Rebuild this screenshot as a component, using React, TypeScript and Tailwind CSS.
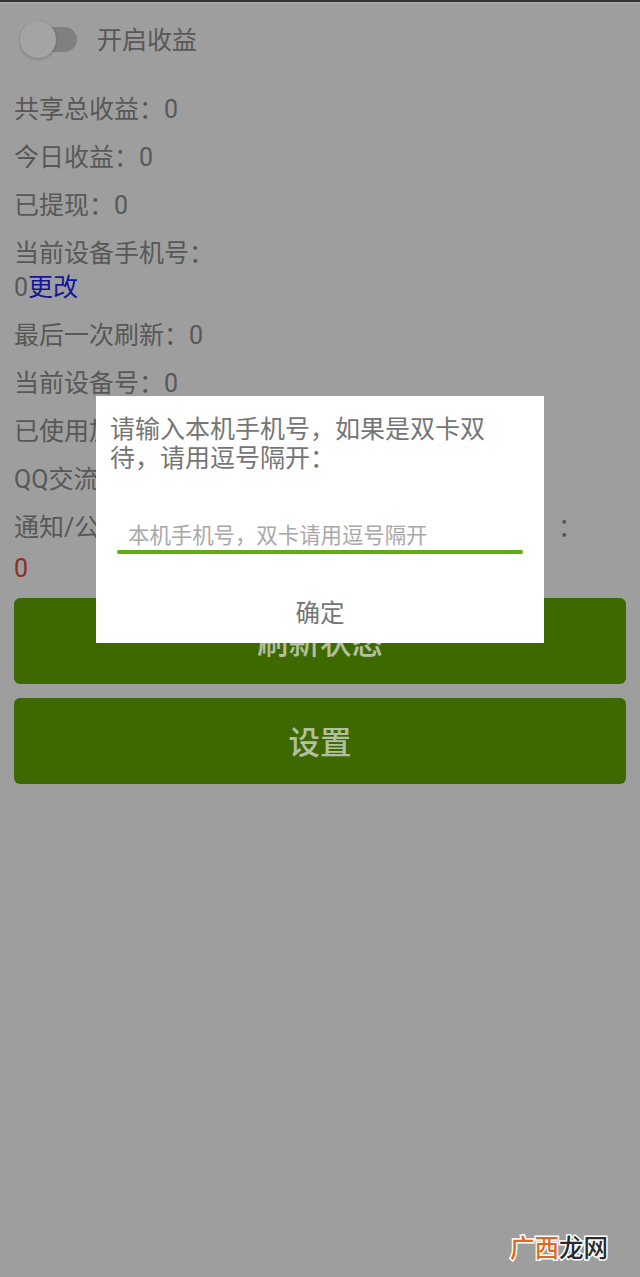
import React from 'react';

const cjk = "font-['Roboto','Noto_Sans_CJK_SC',sans-serif]";

const StatRow: React.FC<{ label: string; value?: string }> = ({ label, value = '0' }) => (
    <p className="h-[48px] leading-[48px] text-[25px] text-[#585858] whitespace-nowrap overflow-hidden">
        {label}：{value}
    </p>
);

const App: React.FC = () => {
    return (
        <div className={`relative w-[640px] h-[1277px] overflow-hidden bg-[#9e9e9e] ${cjk}`}>
            <div className="h-[2px] bg-[#333333]" />
            <div className="h-[2px] bg-[#a8a8a8]" />

            <div className="h-[72px] pl-[20px] flex items-center">
                <div className="relative w-[58px] h-[38px] mr-[19px]">
                    <div className="absolute left-[16px] top-[6px] w-[41px] h-[25px] rounded-full bg-[#808080]" />
                    <div className="absolute left-0 top-0 w-[36px] h-[37px] rounded-full bg-[#a4a4a4] shadow-[0_1px_3px_rgba(0,0,0,0.25)]" />
                </div>
                <span className="pt-[2px] text-[25px] text-[#585858]">开启收益</span>
            </div>

            <div className="px-[14px] pt-[10px]">
                <StatRow label="共享总收益" />
                <StatRow label="今日收益" />
                <StatRow label="已提现" />
                <p className="pt-[7px] text-[25px] leading-[34px] text-[#585858]">当前设备手机号：</p>
                <p className="text-[25px] leading-[34px] text-[#585858]">
                    0<span className="text-[#15159a]">更改</span>
                </p>
                <div className="h-[7px]" />
                <StatRow label="最后一次刷新" />
                <StatRow label="当前设备号" />
                <StatRow label="已使用加速流量" />
                <StatRow label="QQ交流群" />
                <div className="h-[48px] w-[569px] flex justify-between items-center text-[25px] text-[#585858]">
                    <span>通知/公告</span>
                    <span>：</span>
                </div>
                <p className="h-[34px] leading-[34px] text-[25px] text-[#8f2a2a]">0</p>
                <div className="h-[86px] mt-[12px] pt-[6px] rounded-[6px] bg-[#3d6900] flex items-center justify-center text-[31.5px] font-medium text-[#b0c0a0]">
                    刷新状态
                </div>
                <div className="h-[86px] mt-[14px] pt-[6px] rounded-[6px] bg-[#3d6900] flex items-center justify-center text-[31.5px] font-medium text-[#b0c0a0]">
                    设置
                </div>
            </div>

            <div className="absolute left-[96px] top-[396px] w-[448px] h-[247px] bg-white">
                <p className="pl-[14px] pr-[50px] pt-[19px] text-[25px] leading-[29px] text-[#757575]">
                    请输入本机手机号，如果是双卡双待，请用逗号隔开：
                </p>
                <div className="absolute left-[21px] top-[123px] w-[406px] h-[31px] pl-[11px] text-[21.4px] leading-[34px] text-[#a8a8a8] whitespace-nowrap">
                    本机手机号，双卡请用逗号隔开
                </div>
                <div className="absolute left-[21px] top-[154px] w-[406px] h-[4px] rounded-full bg-[#62ab12]" />
                <p className="absolute left-0 right-0 top-[201px] text-center text-[24.5px] leading-[34px] text-[#757575]">
                    确定
                </p>
            </div>

            <div className="absolute left-[510px] top-[1233px] text-[24.5px] leading-[32px] font-medium whitespace-nowrap [-webkit-text-stroke:3px_#ffffff] [paint-order:stroke]">
                <span className="text-[#e06a1c]">广西</span>
                <span className="text-[#2a2a2a]">龙网</span>
            </div>
        </div>
    );
};

export default App;
